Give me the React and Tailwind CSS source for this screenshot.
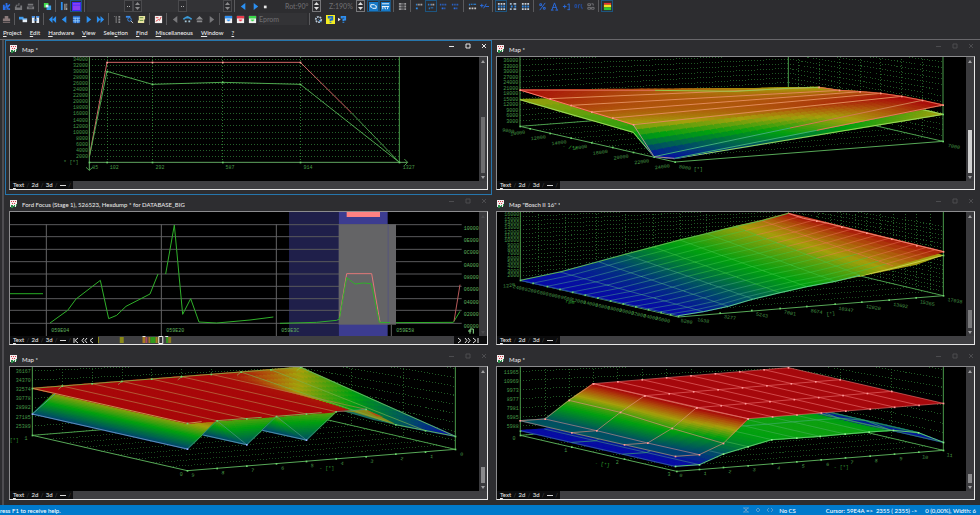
import React from 'react';
import clsx from 'clsx';

// blue -> teal -> green -> yellow -> red
const RAMP = [
  [0, [8, 8, 168]],
  [0.2, [0, 80, 100]],
  [0.45, [0, 160, 16]],
  [0.7, [165, 160, 12]],
  [0.85, [175, 85, 12]],
  [1, [168, 8, 10]],
];

const heat = (t) => {
  const v = Math.min(1, Math.max(0, t));
  let i = 1;
  while (i < RAMP.length - 1 && v > RAMP[i][0]) i++;
  const [a, ca] = RAMP[i - 1];
  const [b, cb] = RAMP[i];
  const k = (v - a) / (b - a);
  return `rgb(${ca.map((c, n) => Math.round(c + (cb[n] - c) * k)).join(',')})`;
};

const mix = (a, b, k) => a.map((v, i) => v + (b[i] - v) * k);
const pts = (list) => list.map(([x, y]) => `${x},${y}`).join(' ');

// rows: list of rows, each a list of [x, y, heat]
const Surface = ({ rows, nu = 6, nv = 6 }) => {
  const cells = [];
  for (let r = 0; r < rows.length - 1; r++) {
    for (let c = 0; c < rows[r].length - 1; c++) {
      const at = (u, v) =>
        mix(mix(rows[r][c], rows[r][c + 1], u), mix(rows[r + 1][c], rows[r + 1][c + 1], u), v);
      for (let i = 0; i < nu; i++) {
        for (let j = 0; j < nv; j++) {
          const mid = at((i + 0.5) / nu, (j + 0.5) / nv);
          const color = heat(mid[2]);
          cells.push(
            <polygon
              key={`${r}-${c}-${i}-${j}`}
              points={pts([
                at(i / nu, j / nv),
                at((i + 1) / nu, j / nv),
                at((i + 1) / nu, (j + 1) / nv),
                at(i / nu, (j + 1) / nv),
              ])}
              fill={color}
              stroke={color}
              strokeWidth="4"
              strokeLinejoin="bevel"
            />
          );
        }
      }
    }
  }
  return <g>{cells}</g>;
};

const Line = ({ p, color = '#4a9a4a', w = 3, dash, o = 1 }) => (
  <polyline
    points={pts(p)}
    fill="none"
    stroke={color}
    strokeWidth={w}
    strokeDasharray={dash}
    opacity={o}
    shapeRendering={dash ? 'crispEdges' : undefined}
  />
);

const Dots = ({ p, color = '#6cd66c' }) =>
  p.map(([x, y], i) => <rect key={i} x={x - 2} y={y - 2} width="5" height="5" fill={color} />);

const Label = ({ x, y, children, rot, anchor = 'middle', color = '#479a47' }) => (
  <text
    x={x}
    y={y + 5}
    fontSize="15"
    textAnchor={anchor}
    fill={color}
    fontFamily="'Liberation Mono', monospace"
    transform={rot ? `rotate(${rot} ${x} ${y})` : undefined}
  >
    {children}
  </text>
);

// dotted side walls and floor of the 3d box
const Box = ({ left, back, right, front, step, backStep, rightStep, cols = [], floor = 8 }) => (
  <g>
    {Array.from({ length: 17 }, (_, k) => (
      <Line
        key={k}
        color="#1f5523"
        dash="3 6"
        p={[
          [left[0], left[1] - step * k],
          [back[0], back[1] - backStep * k],
          [right[0], right[1] - rightStep * k],
        ]}
      />
    ))}
    {cols.map(([x, y], i) => (
      <Line key={i} color="#266029" dash="3 6" p={[[x, 0], [x, y]]} />
    ))}
    {Array.from({ length: floor }, (_, i) => {
      const k = (i + 1) / (floor + 1);
      return <Line key={i} color="#1a4a1d" dash="3 6" p={[mix(left, front, k), mix(back, right, k)]} />;
    })}
    <Line p={[left, back, right]} />
    <Line p={[left, front, right]} color="#57a857" />
    <Line p={[[left[0], 0], left]} />
    <Line p={[[right[0], 0], right]} />
    <Line p={[[back[0], 0], back]} />
  </g>
);

const Curve2d = () => {
  const xs = [321, 457, 668, 901];
  return (
    <g>
      {Array.from({ length: 17 }, (_, i) => {
        const y = 373 - (i + 1) * 18.2;
        return (
          <g key={i}>
            <Line color="#24602a" dash="3 6" p={[[268, y], [1198, y]]} />
            <Label x={264} y={y} anchor="end">{(i + 1) * 2000}</Label>
          </g>
        );
      })}
      {xs.map((x) => (
        <Line key={x} color="#2f7a34" dash="3 6" p={[[x, 57], [x, 373]]} />
      ))}
      <Line p={[[268, 57], [268, 397]]} color="#5fa55f" />
      <Line p={[[258, 388], [268, 397], [278, 388]]} />
      <Line p={[[268, 373], [1223, 373]]} color="#5fa55f" />
      <Line p={[[1213, 363], [1223, 373], [1213, 383]]} />
      <Line p={[[1198, 57], [1198, 373]]} />
      <Line color="#d06464" p={[[268, 355], [321, 73], [901, 73], [1055, 225]]} />
      <Line color="#4a9a4a" p={[[1055, 225], [1198, 373]]} />
      <Line color="#4fa84f" p={[[268, 358], [321, 100], [457, 139], [668, 133], [901, 139], [1198, 373]]} />
      <Dots p={[[321, 100], [457, 139], [668, 133], [901, 139], [1198, 373], [268, 373], [321, 373], [457, 373], [668, 373], [901, 373]]} />
      <Dots color="#ff9a9a" p={[[321, 73], [457, 73], [668, 73], [901, 73]]} />
      <Label x={286} y={387}>85</Label>
      <Label x={343} y={387}>102</Label>
      <Label x={480} y={387}>292</Label>
      <Label x={690} y={387}>587</Label>
      <Label x={924} y={387}>914</Label>
      <Label x={1226} y={387}>1327</Label>
      <Label x={213} y={372}>* [*]</Label>
    </g>
  );
};

const ValleyMap = () => {
  const starts = [[90, 156, 1], [180, 182, 0.95], [243, 202, 0.9], [305, 222, 0.85], [368, 240, 0.78], [430, 260, 0.68], [492, 356, 0], [553, 361, 0]];
  const ends = [[895, 151, 0.7], [987, 148, 0.68], [1048, 157, 0.76], [1110, 161, 0.84], [1172, 166, 0.92], [1235, 175, 1], [1297, 187, 1], [1359, 201, 1]];
  const top = starts.map((s, i) => [s, ends[i]]);
  const low = [
    [[90, 185, 0.68], [895, 165, 0.6]],
    [[430, 283, 0.5], [1235, 205, 0.6]],
    [[492, 356, 0], [1297, 215, 0.62]],
    [[553, 362, 0], [1359, 229, 0.7]],
  ];
  return (
    <g>
      <Box
        left={[90, 265]} back={[895, 203]} right={[1359, 310]} front={[555, 372]}
        step={16.6} backStep={14} rightStep={17}
        cols={[925, 987, 1048, 1110, 1172, 1235, 1297].map((x) => [x, 203 + (x - 895) * 0.23])}
      />
      <Surface rows={low} nu={40} nv={6} />
      <Line color="#9ad65a" p={[[90, 185], [430, 283], [492, 356], [553, 362], [1359, 229], [1297, 215]]} />
      <Surface rows={top} nu={40} nv={6} />
      {top.slice(1, 6).map((p, i) => (
        <Line key={i} p={p} color="#e08a58" />
      ))}
      <Line p={[[492, 356], [900, 270]]} color="#3fae78" />
      <Line p={[[900, 270], [1297, 187]]} color="#d07a50" />
      <Line p={[[553, 361], [980, 277]]} color="#3fae78" />
      <Line p={[[980, 277], [1359, 201]]} color="#e07a60" />
      <Line p={[[90, 156], [430, 260]]} color="#ff7a6a" />
      <Line p={[[430, 260], [492, 356], [553, 361]]} color="#a89a8a" />
      <Line p={[[90, 156], [495, 157]]} color="#e0705a" />
      <Line p={[[495, 157], [735, 160], [895, 151], [987, 148]]} color="#9ac84a" />
      <Line p={ends.slice(1)} color="#e06a50" />
      <Dots p={[...ends.slice(1), ...starts.slice(0, 6)]} color="#ff9a8a" />
      <Dots p={[[90, 265], [120, 272], [180, 286], [243, 300], [305, 314], [368, 328], [430, 343], [492, 357], [555, 372], [1359, 310], [1359, 229]]} />
      {[36, 33, 30, 27, 24, 21, 18, 15, 12, 9, 6, 3].map((n, i) => (
        <Label key={n} x={85} y={67 + i * 16.5} anchor="end">{n * 1000}</Label>
      ))}
      <Label x={55} y={278} rot={10}>9000</Label>
      {[10, 12, 14, 16, 18, 20, 22, 24].map((n, i) => (
        <Label key={n} x={83 + i * 62} y={285 + Math.round(i * 14.4)} rot={-8}>{n * 1000}</Label>
      ))}
      <Label x={240} y={328} rot={10} color="#2fae2f">- /*/</Label>
      <Label x={585} y={388} rot={10}>8000</Label>
      <Label x={625} y={393}>[*]</Label>
      <Label x={1392} y={325} rot={10}>7000</Label>
    </g>
  );
};

const Hexdump = () => {
  const green = '#2fb02a';
  return (
    <g>
      <rect x="867" y="50" width="149" height="380" fill="#1f1f4a" />
      <rect x="1016" y="50" width="147" height="380" fill="#3c3c90" />
      {[95, 131, 169, 206, 243, 280, 317, 352, 391].map((y) => (
        <Line key={y} color="#5a5a5c" p={[[30, y], [1385, y]]} />
      ))}
      <rect x="1016" y="94" width="172" height="301" fill="#646466" />
      <rect x="1163" y="94" width="3" height="301" fill="#55557c" />
      <rect x="1040" y="57" width="100" height="15" fill="#ff8282" />
      {[139, 484, 829, 1174].map((x) => (
        <Line key={x} color="#646466" p={[[x, x === 1174 ? 395 : 94], [x, 429]]} />
      ))}
      <Line color="#1f8a1c" w={4} p={[[30, 302], [129, 302]]} />
      <Line color={green} p={[[150, 390], [203, 352], [228, 318], [301, 262], [326, 377], [350, 367], [378, 340], [450, 303], [474, 243]]} />
      <Line color={green} p={[[497, 243], [523, 96], [548, 364], [572, 317], [597, 387], [650, 390], [750, 381], [820, 372]]} />
      <Line color="#e07878" p={[[1018, 375], [1040, 242], [1115, 242], [1140, 388]]} />
      <Line color={green} p={[[840, 391], [950, 388], [1010, 382], [1018, 378], [1040, 254], [1065, 273], [1090, 270], [1114, 272], [1138, 388], [1170, 389]]} />
      <Line color={green} p={[[1188, 389], [1360, 388], [1380, 355]]} />
      <Line color="#b85a5a" p={[[1362, 385], [1380, 275]]} />
      {['10000', '0E000', '0C000', '0A000', '08000', '06000', '04000', '02000', '00000'].map((t, i) => (
        <Label key={t} x={1436} y={105 + i * 37} anchor="end" color="#5fb45f">{t}</Label>
      ))}
      {['059E04', '059E20', '059E3C', '059E58'].map((t, i) => (
        <Label key={t} x={181 + i * 345} y={412} color="#5fb45f">{t}</Label>
      ))}
      <Line color="#8be08b" p={[[1410, 422], [1410, 408], [1420, 408], [1420, 422]]} />
      <Line color="#8be08b" p={[[1404, 414], [1414, 414]]} />
    </g>
  );
};

const BoschMap = () => {
  const top = [[91, 262, 0], [210, 237, 0.03], [325, 206, 0.12], [405, 184, 0.26], [490, 162, 0.4], [570, 141, 0.48], [650, 122, 0.58], [735, 101, 0.68], [815, 83, 0.78], [895, 61, 0.98]];
  const bottom = [[565, 368, 0], [640, 356, 0.04], [715, 340, 0.12], [790, 318, 0.22], [870, 299, 0.34], [950, 281, 0.44], [1035, 265, 0.5], [1110, 247, 0.58], [1210, 219, 0.74], [1360, 176, 0.96]];
  const splits = [0.08, 0.17, 0.25, 0.33, 0.41, 0.49, 0.57, 0.65, 0.73, 0.81, 0.89, 0.95];
  const lineColor = (t) => (t > 0.68 ? '#f07a5a' : t > 0.3 ? '#3fc84a' : '#4fb08a');
  return (
    <g>
      <Box
        left={[91, 262]} back={[895, 198]} right={[1360, 308]} front={[565, 372]}
        step={12.7} backStep={11} rightStep={13}
        cols={[145, 226, 320, 405, 490, 570, 650, 940, 985, 1020, 1055, 1095, 1130, 1170, 1210, 1245, 1280, 1320].map((x) => [x, x < 895 ? 262 - (x - 91) * 0.08 : 198 + (x - 895) * 0.237])}
      />
      <polygon points="1040,265 1280,215 1360,187 1280,160" fill="#a5a010" />
      <Line color="#c8d04a" p={[[1105, 250], [1200, 228], [1360, 187]]} />
      <Surface rows={[top, bottom]} nu={6} nv={16} />
      {splits.map((k) =>
        top.slice(1).map((_, c) => {
          const a = mix(top[c], bottom[c], k);
          const b = mix(top[c + 1], bottom[c + 1], k);
          return <Line key={`${k}-${c}`} p={[a, b]} w={2} o={0.7} color={lineColor((a[2] + b[2]) / 2)} />;
        })
      )}
      {top.map((t, c) =>
        [0, 0.33, 0.66].map((k) => {
          const a = mix(t, bottom[c], k);
          const b = mix(t, bottom[c], k + 0.34);
          return <Line key={`${c}-${k}`} p={[a, b]} w={2} o={0.7} color={lineColor((a[2] + b[2]) / 2)} />;
        })
      )}
      <Line p={top} color="#5fb84a" />
      <Line p={bottom.slice(0, 8)} color="#5fc88a" />
      <Line p={[[895, 61], [940, 76], [1010, 90], [1130, 120], [1245, 148], [1360, 176]]} color="#f08070" />
      <Dots p={[[91, 262], [565, 370], [690, 360], [785, 352], [870, 346], [950, 340], [1035, 333], [1115, 327], [1197, 321], [1278, 314], [1360, 308], [1360, 187]]} />
      <Dots p={splits.map((k) => mix([91, 262], [565, 370], k))} />
      <Dots color="#ff9a8a" p={[[1360, 176], [1280, 158], [1205, 138], [1130, 120], [1055, 102], [980, 84]]} />
      {Array.from({ length: 15 }, (_, i) => (
        <Label key={i} x={88} y={65 + i * 13} anchor="end">{(16 - i) * 1000}</Label>
      ))}
      <Label x={57} y={277} rot={-8}>1220</Label>
      {['2400', '5200', '6800', '8000', '9600', '12000', '14000', '16000', '18000', '20000', '22000', '24000', '26000'].map((t, i) => (
        <Label key={t} x={86 + i * 36} y={284 + i * 8} rot={12}>{t}</Label>
      ))}
      <Label x={240} y={326} rot={10} color="#2fae2f">rpm</Label>
      {[['5200', 590, 385], ['1638', 640, 382], ['3277', 720, 373], ['5243', 816, 366], ['7001', 900, 360], ['8674', 980, 355], ['10347', 1068, 349], ['12020', 1150, 343], ['13692', 1232, 337], ['15365', 1312, 330], ['17038', 1395, 323]].map(([t, x, y]) => (
        <Label key={x} x={x} y={y} rot={10}>{t}</Label>
      ))}
      <Label x={1022} y={362} rot={-8}>[*]</Label>
    </g>
  );
};

const FoldMap = () => {
  const back = Array.from({ length: 10 }, (_, i) => [97 + i * 89.4, 121 - i * 7]);
  const backHeat = [1, 1, 1, 1, 1, 1, 1, 0.97, 0.84, 0.7];
  const front = [[562, 226, 1], [651, 218, 1], [740, 212, 1], [829, 205, 1], [919, 198, 1], [1008, 191, 1], [1098, 184, 0.95], [1187, 230, 0.25], [1276, 248, 0.12], [1366, 265, 0]];
  const top = back.map((b, i) => [...b, backHeat[i]]);
  return (
    <g>
      <Box
        left={[97, 262]} back={[902, 197]} right={[1366, 304]} front={[562, 368]}
        step={27.6} backStep={23} rightStep={27}
        cols={[[187, 255], [276, 248], [366, 98], [455, 91], [545, 85], [634, 78], [1055, 235], [1210, 268]]}
      />
      <Surface rows={[[[97, 198, 0.15], [187, 113, 0.85]], [[562, 303, 0.15], [651, 218, 0.85]]]} nu={24} nv={12} />
      <Surface rows={[[[829, 205, 0.55], [1008, 191, 0.62]], [[919, 276, 0.2], [919, 276, 0.2]]]} nu={8} nv={14} />
      <Surface rows={[[[651, 218, 0.6], [829, 205, 0.6]], [[740, 290, 0.2], [740, 290, 0.2]]]} nu={8} nv={14} />
      <Surface rows={[[[651, 218, 0.62], [651, 218, 0.62]], [[608, 261, 0.18], [740, 290, 0.18]]]} nu={6} nv={14} />
      <Surface rows={[[[829, 205, 0.62], [829, 205, 0.62]], [[787, 247, 0.18], [919, 276, 0.18]]]} nu={6} nv={14} />
      <Surface rows={[top, front]} nu={8} nv={14} />
      <polygon points="1030,190 1098,184 1187,228 1120,212" fill="#8a8a18" />
      <polygon points="1030,190 1060,192 1187,230 1120,216" fill="#1a7060" />
      <polygon points="1098,186 1150,206 1130,205" fill="#b84a12" />
      {back.slice(1, 9).map((b, i) => (
        <Line key={i} p={[b, front[i + 1]]} w={2} color={i > 5 ? '#7ab04a' : '#b8804a'} />
      ))}
      {[187, 366, 545, 723, 902].map((x, i) => (
        <Line key={x} w={2} color="#8ac85a" p={[[x, 114 - i * 14], [x - 12, 124 - i * 14]]} />
      ))}
      <Line p={back} color="#8a9a3a" />
      <Line p={[[97, 121], [562, 226], [605, 221]]} color="#c0904a" />
      <Line p={[[651, 218], [785, 208]]} color="#8aa04a" />
      <Line p={[[829, 205], [965, 194]]} color="#8aa04a" />
      <Line p={[[97, 121], [97, 198]]} />
      <Line p={[[97, 198], [165, 138]]} color="#4f9a8a" />
      <Line p={[[97, 198], [562, 303]]} color="#5f8ab8" />
      <Line p={[[562, 303], [651, 218], [740, 290], [829, 205], [919, 276], [1008, 191], [1098, 184]]} color="#4f9a88" w={2} />
      <Line p={[[610, 261], [740, 290]]} color="#4f8aa8" />
      <Line p={[[787, 247], [919, 276]]} color="#4f8aa8" />
      <Line p={[[902, 58], [1366, 265], [1187, 230]]} color="#5fb05f" />
      <Dots p={[...back, ...front, [97, 262], [562, 368], [651, 361], [740, 354], [829, 347], [919, 340], [1008, 332], [1098, 326], [1187, 318], [1276, 312], [1366, 304]]} />
      <Dots color="#9ab0ff" p={[[97, 198], [562, 303], [740, 290], [919, 276]]} />
      {[36167, 34370, 32574, 30778, 28982, 27185, 25389].map((n, i) => (
        <Label key={n} x={92} y={69 + Math.round(i * 27.5)} anchor="end">{n}</Label>
      ))}
      <Label x={78} y={272}>1</Label>
      <Label x={43} y={278} color="#2f8f2f">[*]</Label>
      <Label x={544} y={380}>0</Label>
      {[9, 8, 7, 6, 5, 4, 3, 2, 1, 0].map((n, i) => (
        <Label key={n} x={579 + Math.round(i * 89.5)} y={381 - i * 7} rot={8}>{n}</Label>
      ))}
      <Label x={980} y={362} color="#2f8f2f">- [*]</Label>
    </g>
  );
};

const PlateauMap = () => {
  const slope = [
    [[90, 218, 0.22], [165, 213, 0.2], [237, 157, 0.56], [310, 107, 1]],
    [[245, 254, 0.22], [320, 248, 0.2], [391, 193, 0.56], [464, 143, 1]],
    [[403, 290, 0.2], [473, 285, 0.18], [546, 241, 0.5], [620, 179, 1]],
    [[556, 325, 0.16], [628, 320, 0.14], [700, 286, 0.32], [774, 212, 1]],
  ];
  const ridge = [[556, 355, 0], [628, 350, 0.02], [700, 318, 0.2], [774, 296, 0.36], [845, 275, 0.45], [920, 270, 0.46], [990, 265, 0.47], [1065, 258, 0.47], [1137, 252, 0.47], [1210, 247, 0.42], [1285, 254, 0.22], [1360, 283, 0]];
  const far = ridge.map(([x, y, t]) => [x - 465, y - 107, t]);
  const rows = [[310, 107], [464, 143], [620, 179], [774, 212]];
  const rowEnds = [[895, 59], [1050, 95], [1205, 130], [1360, 166]];
  const steps = [0, 1, 2, 3, 4, 5, 6, 7, 8];
  return (
    <g>
      <Box
        left={[91, 262]} back={[895, 198]} right={[1360, 307]} front={[560, 370]}
        step={27.4} backStep={23} rightStep={27}
        cols={[[165, 212], [237, 157], [310, 107], [383, 100], [457, 94], [530, 88], [603, 82], [1050, 230], [1205, 268]]}
      />
      <Surface rows={[far, ridge]} nu={4} nv={24} />
      {ridge.map((p, i) => (
        <Line key={i} p={[far[i], p]} w={2} color={i < 3 ? '#3f7a90' : '#3fae50'} />
      ))}
      {[0.33, 0.66].map((k) => (
        <Line key={k} w={2} color="#3fae70" p={ridge.map((p, i) => mix(far[i], p, k))} />
      ))}
      <Line p={ridge} color="#5fc86a" />
      <Dots p={ridge} color="#8af08a" />
      <Surface rows={slope} nu={14} nv={5} />
      <polygon points={pts([rows[0], rowEnds[0], rowEnds[3], rows[3]])} fill="#a6080c" />
      {slope.map((p, i) => (
        <Line key={i} p={p} color="#e0907a" w={2} />
      ))}
      {[0, 1, 2, 3].map((c) => (
        <Line key={c} p={slope.map((r) => r[c])} color={c < 2 ? '#c08a8a' : '#e0907a'} w={2} />
      ))}
      {rows.map((p, i) => (
        <Line key={i} p={[p, rowEnds[i]]} color="#e86a6a" w={2} />
      ))}
      {steps.map((i) => (
        <Line key={i} w={2} color="#e86a6a" p={[mix(rows[0], rowEnds[0], i / 8), mix(rows[3], rowEnds[3], i / 8)]} />
      ))}
      {rows.map((p, r) => (
        <Dots key={r} color="#ff9a9a" p={steps.map((i) => mix(p, rowEnds[r], i / 8))} />
      ))}
      <Dots color="#ff9a9a" p={slope.flat()} />
      <Dots p={[[91, 262], [91, 249], [245, 297], [403, 333], [560, 370], [628, 364], [700, 358], [774, 353], [847, 347], [920, 341], [993, 335], [1066, 329], [1140, 324], [1213, 318], [1286, 312], [1360, 307]]} />
      {[11965, 10969, 9973, 8977, 7981, 6985, 5988].map((n, i) => (
        <Label key={n} x={86} y={73 + Math.round(i * 27.2)} anchor="end">{n}</Label>
      ))}
      {[0, 1, 2, 3].map((n) => (
        <Label key={n} x={72 + n * 155} y={272 + n * 36}>{n}</Label>
      ))}
      <Label x={337} y={348} rot={10} color="#2fae2f">- [*]</Label>
      {[0, 1, 2, 3, 4, 5, 6, 7, 8, 9, 10, 11].map((n) => (
        <Label key={n} x={573 + Math.round(n * 73.3)} y={382 - Math.round(n * 5.5)} rot={8}>{n}</Label>
      ))}
      <Label x={1054} y={357} color="#2f8f2f">- [*]</Label>
    </g>
  );
};

const MapIcon = () => (
  <svg viewBox="0 0 8 8" className="size-2 shrink-0" aria-hidden="true">
    <rect width="7" height="7" fill="#f4eeee" />
    <path d="M1 1h1v1H1zM3 1h1v1H3zM5 1h1v1H5zM2 3h1v1H2zM4 3h1v1H4z" fill="#d83a4a" />
    <path d="M1 5h2v1h1V5h1v2H3v1H1zM6 4h1v2H6z" fill="#2a8a4a" />
    <path d="M6 6h1v1H6z" fill="#2d2d30" />
  </svg>
);

const WindowButton = ({ label, d, active }) => (
  <button type="button" aria-label={label} className={clsx('flex h-3 w-4 items-center justify-center', active ? 'text-[#e6e6e6]' : 'text-[#4c4c4f]')}>
    <svg viewBox="0 0 6 6" className="size-[6px]" fill="none" stroke="currentColor">
      <path d={d} />
    </svg>
  </button>
);

const TabSlash = () => <span className="text-[#4a4a4c]">/</span>;

const TabStrip = ({ nav, view }) => (
  <div className="flex h-2 items-stretch bg-[#0c0c0d] text-[6px] leading-[8px] text-[#e4e4e4]">
    <div role="tablist" className="flex w-[63px] shrink-0 items-center justify-between pl-[3px] pr-[2px]">
      <button type="button" role="tab" aria-selected="false"><u>T</u>ext</button>
      <TabSlash />
      <button type="button" role="tab" aria-selected={view === '2d'}>2d</button>
      <TabSlash />
      <button type="button" role="tab" aria-selected={view === '3d'}>3d</button>
      <TabSlash />
      <button type="button" role="tab" aria-selected="false" aria-label="Split" className="h-px w-[6px] bg-[#d8d8d8]" />
      <TabSlash />
    </div>
    {nav ? (
      <>
        <div className="flex w-[25px] shrink-0 items-center justify-between pr-[3px]">
          <button type="button" aria-label="First"><NavGlyph d="M1 1v5M5 1L2 3.5L5 6" /></button>
          <button type="button" aria-label="Fast back"><NavGlyph d="M3 1L1 3.5L3 6M6 1L4 3.5L6 6" /></button>
          <button type="button" aria-label="Back"><NavGlyph d="M5 1L2 3.5L5 6" /></button>
        </div>
        <div className="min-w-0 flex-1 bg-[#3f3f42]">
          <svg viewBox="0 0 360 8" preserveAspectRatio="none" className="block h-2 w-full">
            <path d="M0 1h1v6H0zM22 1h4v6h-4z" fill="#8a8a18" />
            <path d="M45 1h3v6h-3zM51 1h2v6h-2zM58 1h2v6h-2z" fill="#a87a20" />
            <path d="M48 1h2v6h-2z" fill="#a84a6a" />
            <path d="M53 1h5v6h-5zM69 1h2v6h-2z" fill="#2f9a1c" />
            <path d="M60 1h2v6h-2zM71 1h3v6h-3z" fill="#8a7a20" />
            <path d="M61.500 .5h4v7h-4z" fill="#303033" stroke="#f4f4f4" />
            <path d="M45 0h3v1h-3zM68 0h3v1h-3z" fill="#e8e8e8" />
          </svg>
        </div>
        <div className="flex w-[33px] shrink-0 items-center gap-px pl-[2px]">
          <button type="button" aria-label="Forward"><NavGlyph d="M2 1L5 3.500L2 6" /></button>
          <button type="button" aria-label="Fast forward"><NavGlyph d="M1 1L3 3.500L1 6M4 1L6 3.500L4 6" /></button>
          <button type="button" aria-label="Last"><NavGlyph d="M1 1L4 3.500L1 6M6 1v5" /></button>
        </div>
      </>
    ) : (
      <div className="flex-1 bg-[#3f3f42]" />
    )}
  </div>
);

const NavGlyph = ({ d }) => (
  <svg viewBox="0 0 7 7" className="size-[7px]" fill="none" stroke="#e0e0e0">
    <path d={d} />
  </svg>
);

const Scrollbar = ({ thumb }) => (
  <div role="scrollbar" aria-orientation="vertical" aria-valuenow={80} className={clsx('flex w-2 shrink-0 flex-col items-center bg-[#3a3a3d]', thumb ? 'text-[#a0a0a2]' : 'text-[#4a4a4d]')}>
    <svg viewBox="0 0 8 8" className="size-2"><path d="M2 6L4 3L6 6z" fill="currentColor" /></svg>
    <div className="flex flex-1 items-end">{thumb && <div className={clsx('w-1', thumb)} />}</div>
    <svg viewBox="0 0 8 8" className="size-2"><path d="M2 3L4 6L6 3z" fill="currentColor" /></svg>
  </div>
);

const MapWindow = ({ title, active, view = '3d', nav, thumb, x, children }) => (
  <section className={clsx('flex min-w-0 flex-col pb-[5px]', active && 'outline outline-1 -outline-offset-1 outline-[#2676ad]')}>
    <header className="flex h-4 items-center pl-1">
      <div className="mt-[2px] flex min-w-0 flex-1 items-center gap-1 pl-px">
        <MapIcon />
        <h2 className="truncate text-[6px] leading-[9px] text-[#e4e4e4]">{title}</h2>
      </div>
      <div className="mb-1 flex shrink-0">
        <WindowButton active={active} label="Minimize" d="M0 3.500h5" />
        <WindowButton active={active} label="Maximize" d="M1 1h4v4H1z" />
        <WindowButton active={active} label="Close" d="M1 1L5 5M5 1L1 5" />
      </div>
    </header>
    <div className="mx-1 flex flex-col border border-b-[#e8e8e8] border-l-[#8c8c8e] border-r-[#e8e8e8] border-t-[#8c8c8e] bg-black">
      <div className="flex">
        <svg viewBox={`${x} 57 1407 372`} className="block h-[124px] min-w-0 flex-1" role="img" aria-label={title}>
          {children}
        </svg>
        <Scrollbar thumb={thumb} />
      </div>
      <TabStrip nav={nav} view={view} />
    </div>
  </section>
);

const BLUE = '#2b8ff0';
const GREY = '#77777a';

const ICONS = {
  factory: <path d="M1 9V3h2v2h1V1h2v3l3-2v2L7 6v1h2v2H7V8H6v1H5V6H4v3z" fill="#2a6fe8" />,
  disk: <path d="M2 3h3v1H3v2h4V4h2v5H1V5h1zM5 1h1v3H5z" fill={GREY} />,
  stack: <path d="M2 2h6v2H2zM1 5h8v3H1zM3 6h4v1H3z" fill={GREY} fillRule="evenodd" />,
  chip: (
    <>
      <path d="M1 1h5v3H4v2H1z" fill="#3ddc4a" />
      <path d="M5 4h4v5H4V6h1z" fill="#3aa0e8" />
      <path d="M3 3h3v3H3z" fill="#e8f4ff" />
    </>
  ),
  levels: (
    <>
      <path d="M1 0h2v9H1z" fill={BLUE} />
      <path d="M5 2h1v7H5zM7 2h1v1H7zM7 4h1v1H7zM7 6h1v3H7z" fill="#d0d0d0" />
    </>
  ),
  purple: (
    <>
      <path d="M0 0h10v10H0z" fill="#3a2af8" />
      <path d="M1 1h8v2H1zM1 4h8v5H1z" fill="#8a3ff0" />
    </>
  ),
  prev: <path d="M7 1v8L2 5z" fill={BLUE} />,
  next: <path d="M3 1v8L8 5z" fill={BLUE} />,
  prevGrey: <path d="M7 1v8L2 5z" fill={GREY} />,
  nextGrey: <path d="M3 1v8L8 5z" fill={GREY} />,
  first: <path d="M5 1v8L1 5zM9 1v8L5 5z" fill={BLUE} />,
  last: <path d="M1 1v8L5 5zM5 1v8L9 5z" fill={BLUE} />,
  dot: <path d="M1 4h3v3H1z" fill="#e8e8e8" />,
  rotate: (
    <>
      <path d="M0 0h10v10H0z" fill="#1679c8" />
      <path d="M2 6V3h4l2 2M8 4v3H4L2 5" fill="none" stroke="#fff" />
    </>
  ),
  wave: (
    <>
      <path d="M0 0h10v10H0z" fill="#1679c8" />
      <path d="M1 2h8M1 5h8M2 5v3M4 5l1 3M8 5L7 8" fill="none" stroke="#fff" />
    </>
  ),
  greyGrid: <path d="M1 1h3v2H1zM5 1h1v2H5zM7 1h2v2H7zM1 4h3v2H1zM5 4h1v2H5zM7 4h2v2H7zM1 7h3v2H1zM5 7h1v2H5zM7 7h2v2H7z" fill="#98989a" />,
  blueGrid: (
    <>
      <path d="M1 1h8v8H1z" fill="#2266c8" />
      <path d="M1 3.500h8M1 6.500h8M3.500 3v6M6.500 3v6" stroke="#9ad0ff" />
    </>
  ),
  bits8: (
    <>
      <path d="M1 2h1v2H1zM1 6h2v2H1z" fill={BLUE} />
      <path d="M3 2h1v2H3zM5 2h1v2H5zM7 2h1v2H7z" fill="#d8d8d8" />
    </>
  ),
  bits16: (
    <>
      <path d="M1 2h1v2H1zM3 2h1v2H3zM2 6h1v2H2zM4 6h3v1H4z" fill={BLUE} />
      <path d="M5 2h1v2H5zM7 2h1v2H7z" fill="#d8d8d8" />
    </>
  ),
  bits32: <path d="M1 2h1v2H1zM3 2h1v2H3zM5 2h1v2H5zM7 2h1v2H7zM3 6h2v2H3zM6 6h1v2H6z" fill="#2a6fe8" />,
  hilo: (
    <>
      <path d="M1 2h1v2H1zM3 2h2v1H3zM6 2h3v1H6z" fill={BLUE} />
      <path d="M1 6h2v2H1zM4 6h2v2H4zM7 6h2v2H7z" fill="#c8c8c8" />
    </>
  ),
  plusMinus: <path d="M0 4h4M2 2v4M4 7l3-5M6 5h4" stroke="#2a6fe8" fill="none" />,
  digits: (
    <>
      <path d="M1 1h2v2H1zM4 1h2v2H4zM7 1h2v2H7zM1 7h2v2H1zM4 7h2v2H4zM7 7h2v2H7z" fill="#c8d0d8" />
      <path d="M1 4h2v2H1zM4 4h2v2H4zM7 4h2v2H7z" fill="#2f86e0" />
    </>
  ),
  digitPair: (
    <>
      <path d="M1 1h2v2H1zM5 1h3v2H5zM1 7h2v2H1zM5 7h3v2H5z" fill="#a8b8c8" />
      <path d="M2 4h2v2H2zM6 4h2v2H6z" fill="#2f86e0" />
    </>
  ),
  rainbow: (
    <>
      <path d="M1 1h8v2H1z" fill="#e83030" />
      <path d="M1 3h8v3H1z" fill="#f0e020" />
      <path d="M1 6h8v3H1z" fill="#30c830" />
    </>
  ),
  stamp: <path d="M3 1h4v3h2v3H1V4h2zM1 8h8v1H1z" fill="#8a7a7a" />,
  windows: (
    <>
      <path d="M0 2h5v3H0z" fill="#3a9af0" />
      <path d="M4 4h5v4H4z" fill="#e8f0f8" />
      <path d="M4 4h5v1H4z" fill="#3a9af0" />
    </>
  ),
  sideBySide: (
    <>
      <path d="M1 1h3v8H1zM6 1h3v8H6z" fill="#e8f0f8" />
      <path d="M1 1h3v2H1zM6 1h3v2H6zM3 5h4v1H3z" fill="#3a8ae8" />
    </>
  ),
  list: <path d="M1 1h1v1H1zM3 1h1v8H3zM6 1h2v2H6zM6 4h2v2H6zM6 7h2v2H6z" fill="#8a8a8c" />,
  search: (
    <>
      <path d="M1 1h5v2H1z" fill="#3a8ae8" />
      <circle cx="5" cy="5" r="2" fill="none" stroke="#3a8ae8" />
      <path d="M6.500 6.500L9 9" stroke="#d0d0d0" />
    </>
  ),
  notes: (
    <>
      <path d="M2 1h7v4H8v4H1V6h1z" fill="#e8e4a0" />
      <path d="M3 3h4M3 6h4" stroke="#5a8a3a" />
    </>
  ),
  chart: (
    <>
      <path d="M1 1h8v8H1z" fill="#f4f0f0" />
      <path d="M2 7l3-2 1 1 2-4M2 3h3" stroke="#d83a3a" fill="none" />
    </>
  ),
  flyBlue: (
    <>
      <path d="M0 4l3-2 2-1 2 1 3 2v1H8L7 4H3L2 5H0z" fill="#3a9ad8" />
      <path d="M2 6h2v2H2zM6 6h2v2H6z" fill="#a8c8d8" />
    </>
  ),
  flyGrey: <path d="M1 5l4-4 4 4zM2 6h6v2H2z" fill="#8a8a8c" />,
  tableBlue: <Sheet fill="#2f8ff0" />,
  tableRed: <Sheet fill="#e83a4a" />,
  tableGreen: <Sheet fill="#3ad84a" />,
  gear: (
    <>
      <circle cx="5" cy="5" r="3" fill="none" stroke="#b8c8d8" strokeWidth="2" strokeDasharray="2 1" />
      <path d="M5 5l3 3" stroke="#3a9af0" />
    </>
  ),
  help: (
    <>
      <path d="M0 0h10v10H0z" fill="#f4ec20" />
      <path d="M3 4V2h4v3H5v2M5 8v1" stroke="#1a6ac8" strokeWidth="2" fill="none" />
    </>
  ),
  whatsThis: (
    <>
      <path d="M0 3l3 2-3 2z" fill="#e8e8e8" />
      <path d="M4 4V2h4v3H6v2M6 8v1" stroke="#2f8ff0" strokeWidth="2" fill="none" />
    </>
  ),
  percent: <path d="M2 2h2v2H2zM6 6h2v2H6zM8 1L2 9" stroke="#2a6fe8" fill="none" />,
  letter: <path d="M2 9L5 1L8 9M3 6h4M1 9h3M6 9h3" stroke="#2a6fe8" fill="none" />,
  plusOne: <path d="M1 5h4M3 3v4M6 3l2-1v6M6 8.500h3" stroke="#2a6fe8" fill="none" />,
  orig: <path d="M1 3h2v3H1zM5 7V3h2M9 3H8v3h1v2" stroke="#2450a8" fill="none" />,
  swap: <path d="M2 2h3v2H2zM6 2h2v2M2 6h3v2H2zM6 6h3v2H6z" stroke={GREY} fill="none" />,
};

function Sheet({ fill }) {
  return (
    <>
      <path d="M1 1h8v8H1z" fill="#f0f0f0" />
      <path d="M1 1h8v3H1zM3 5h4v1H3zM4 6h2v1H4z" fill={fill} />
    </>
  );
}

const Tool = ({ name, on }) => (
  <button type="button" aria-label={name} className={clsx('flex h-3 w-3 shrink-0 items-center justify-center', on && 'outline outline-1 -outline-offset-1 outline-[#1d5580]')}>
    <svg viewBox="0 0 10 10" className="size-[9px]">{ICONS[name]}</svg>
  </button>
);

const Sep = () => (
  <span className="flex h-3 w-[5px] shrink-0 justify-center"><span className="w-px bg-[#5a5a5d]" /></span>
);

const Tools = ({ names, on = [] }) => names.map((n, i) => (n === '|' ? <Sep key={i} /> : <Tool key={i} name={n} on={on.includes(i)} />));

const Spinner = ({ bright }) => (
  <span className={clsx('flex h-3 w-[9px] shrink-0 flex-col border', bright ? 'border-[#77777a] text-[#e0e0e0]' : 'border-[#4a4a4d] text-[#8a8a8c]')}>
    <button type="button" aria-label="Increase" className="flex flex-1 items-center justify-center">
      <svg viewBox="0 0 5 3" className="h-[3px] w-[5px]"><path d="M0 3L2.500 0L5 3z" fill="currentColor" /></svg>
    </button>
    <button type="button" aria-label="Decrease" className="flex flex-1 items-center justify-center">
      <svg viewBox="0 0 5 3" className="h-[3px] w-[5px]"><path d="M0 0L2.500 3L5 0z" fill="currentColor" /></svg>
    </button>
  </span>
);

const MoreButton = () => (
  <button type="button" aria-label="More" className="flex h-3 w-[9px] shrink-0 items-center justify-center gap-px border border-[#4a4a4d]">
    <span className="size-px bg-[#b0b0b0]" />
    <span className="size-px bg-[#b0b0b0]" />
  </button>
);

const Field = ({ label, value = '', className }) => (
  <input aria-label={label} defaultValue={value} className={clsx('h-3 shrink-0 p-0 text-[7px] leading-[10px] text-[#6c6c6f] outline-none', className)} />
);

const MENU = [
  ['', 'P', 'roject'],
  ['', 'E', 'dit'],
  ['', 'H', 'ardware'],
  ['', 'V', 'iew'],
  ['Sele', 'c', 'tion'],
  ['', 'F', 'ind'],
  ['', 'M', 'iscellaneous'],
  ['', 'W', 'indow'],
  ['', '?', ''],
];

const App = () => (
  <div className="flex min-h-screen flex-col overflow-hidden bg-[#2d2d30] font-['Lato','Noto_Sans',sans-serif] font-medium text-[#ececec]">
    <div className="border-b border-[#68676b]">
      <div className="flex h-[12px] items-center overflow-hidden">
        <Tools names={['factory', 'disk', 'stack', '|', 'chip', '|', 'levels', 'purple', '|']} on={[7]} />
        <Field label="Address" className="w-[37px] bg-[#333336]" />
        <MoreButton />
        <Spinner />
        <Field label="Columns" className="w-9 bg-[#333336]" />
        <MoreButton />
        <Field label="Offset" className="w-9 bg-[#333336]" />
        <Spinner />
        <Sep />
        <Tools names={['prev', 'next', 'dot']} />
        <Field label="Rotation" value="Rot:90°" className="w-[39px] pl-3" />
        <Spinner bright />
        <Field label="Zoom" value="Z:190%" className="w-[35px] pl-2" />
        <Spinner bright />
        <div className="flex pl-[2px]">
          <Tools
            names={['rotate', 'wave', '|', 'greyGrid', '|', 'bits8', 'bits16', 'bits32', 'bits32', '|', 'hilo', 'plusMinus', '|', 'digits', 'digitPair', 'digits', '|', 'percent', 'letter', 'plusOne', 'orig', 'swap', '|', 'rainbow']}
            on={[0, 1, 6, 13, 23]}
          />
        </div>
      </div>
      <div className="flex h-[14px] items-center">
        <Tools names={['stamp', '|', 'windows', 'sideBySide', '|', 'first', 'prev', 'blueGrid', 'next', 'last', '|', 'list', 'search', 'notes', '|', 'chart', '|', 'prevGrey', 'flyBlue', 'flyGrey', 'nextGrey', '|', 'tableBlue', 'tableRed', 'tableGreen']} />
        <Field label="Memory" value="Eprom" className="w-[49px] bg-[#333336] pl-px" />
        <Sep />
        <Tools names={['gear', 'help', 'whatsThis']} />
      </div>
      <nav className="flex h-[13px] items-center gap-2 pl-[3px] text-[6px] leading-[9px]">
        {MENU.map(([pre, key, post]) => (
          <button type="button" key={key}>{pre}<u>{key}</u>{post}</button>
        ))}
      </nav>
    </div>

    <main className="flex flex-1 pr-px">
      <div className="flex w-[5px] shrink-0 justify-center"><div className="w-[2px] bg-[#4e4d51]" /></div>
      <div className="grid min-w-0 flex-1 grid-cols-2 content-start">
        <MapWindow title="Map *" active x={30} thumb="h-14 bg-[#6e6e70]"><Curve2d /></MapWindow>
        <MapWindow title="Map *" x={21} thumb="h-[43px] bg-[#d0d0d0]"><ValleyMap /></MapWindow>
        <MapWindow title="Ford Focus (Stage 1), 526523, Hexdump * for DATABASE_BIG" x={30} view="2d" nav><Hexdump /></MapWindow>
        <MapWindow title={'Map "Bosch II 16" *'} x={21} thumb="h-[18px] bg-[#7a7a7c]"><BoschMap /></MapWindow>
        <MapWindow title="Map *" x={30} thumb="h-4 bg-[#8a8a8c]"><FoldMap /></MapWindow>
        <MapWindow title="Map *" x={21} thumb="h-[9px] bg-[#8a8a8c]"><PlateauMap /></MapWindow>
      </div>
    </main>

    <footer className="flex h-[10px] shrink-0 items-center bg-[#007acc] pr-1 text-[6px] leading-[9px] text-white">
      <span className="flex-1">ress F1 to receive help.</span>
      <span className="flex items-center gap-[6px] pr-[6px] text-[#5a9aca]">
        <svg viewBox="0 0 6 6" className="size-[6px]" fill="none" stroke="currentColor"><path d="M0 1h6M0 5h6M1 1l4 4M5 1L1 5" /></svg>
        <svg viewBox="0 0 6 6" className="size-[6px]" fill="none" stroke="currentColor"><path d="M3 1L5 3L3 5L1 3z" /></svg>
        <svg viewBox="0 0 6 6" className="size-[6px]" fill="none" stroke="currentColor"><path d="M2 1L0 3L2 5M4 1L6 3L4 5" /></svg>
      </span>
      <span className="pr-[30px]">No CS</span>
      <span className="pr-[8px]">Cursor: 59E4A =&gt;&nbsp; 2355 ( 2355) -&gt;</span>
      <span>0 (0,00%), Width: 6</span>
    </footer>
  </div>
);

export default App;
